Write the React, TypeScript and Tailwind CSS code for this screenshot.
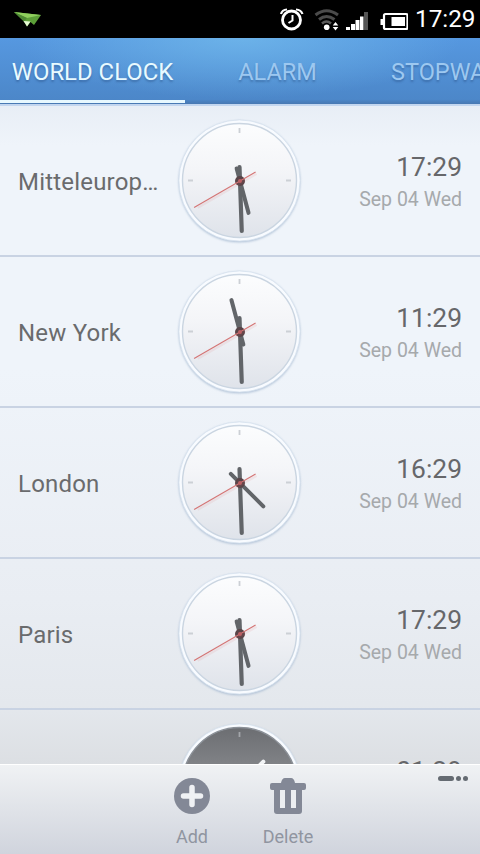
type City = {
  name: string
  time: string
  date: string
  hourAngle: number
  night?: boolean
}

const cities: City[] = [
  { name: "Mitteleuropäische Zeit", time: "17:29", date: "Sep 04 Wed", hourAngle: 165 },
  { name: "New York", time: "11:29", date: "Sep 04 Wed", hourAngle: 345 },
  { name: "London", time: "16:29", date: "Sep 04 Wed", hourAngle: 135 },
  { name: "Paris", time: "17:29", date: "Sep 04 Wed", hourAngle: 165 },
  { name: "", time: "01:29", date: "", hourAngle: 45, night: true },
]

function StatusBar() {
  return (
    <div className="flex h-[38px] shrink-0 items-center bg-black text-white">
      <svg className="ml-[13px]" width="29" height="20" viewBox="0 0 29 20">
        <path d="M1 3 L28 6 L21 16 L17.500 13 L14 17.500 L11 12.500 Z" fill="#5c9f38" />
        <path d="M1 3 L28 6 L14 9 Z" fill="#8fcf5d" />
        <path d="M1 3 L14 9 L11 12.500 Z" fill="#4e8a34" />
        <path d="M10.500 12 L17.500 12.500 L14 17.500 Z" fill="#e6fad2" />
      </svg>
      <svg className="ml-auto" width="130" height="38" viewBox="278 0 130 38" fill="none">
        {/* alarm */}
        <circle cx="291.500" cy="20" r="9" stroke="#fff" strokeWidth="2.800" />
        <path d="M292.500 15 V20.500 L288.500 23" stroke="#fff" strokeWidth="2" />
        <path d="M281 14 Q282 9.800 287 9.500 M296 9.500 Q301 9.800 302.500 14" stroke="#fff" strokeWidth="2.200" />
        {/* wifi */}
        <path d="M315.500 15 Q326.500 6.500 338 15" stroke="#4b4b4b" strokeWidth="3" />
        <path d="M319 19.500 Q326.500 13.500 334.500 19.500" stroke="#4b4b4b" strokeWidth="3" />
        <path d="M322 23.500 Q326.500 19.500 331 23.500" stroke="#5a5a5a" strokeWidth="2.500" />
        <circle cx="326.700" cy="27.200" r="2.800" fill="#fff" />
        <path d="M332.700 25.500 L335.500 22 L338.300 25.500 Z M332.700 27 L335.500 30.500 L338.300 27 Z" fill="#fff" />
        {/* signal */}
        <path d="M346 27h4v3h-4z M351 24h4v6h-4z M355.500 20h4v10h-4z M360 16.500h3.500v13.500h-3.500z" fill="#fff" />
        <path d="M364 12h4v18h-4z" fill="#555" />
        {/* battery */}
        <rect x="384" y="14" width="23.500" height="15" rx="1.500" stroke="#fff" strokeWidth="2.200" />
        <path d="M380.500 19h3v6h-3z M391.500 17h13.500v9h-13.500z" fill="#fff" />
      </svg>
      <span className="ml-[7px] w-[65px] text-[24.300px] leading-none">17:29</span>
    </div>
  )
}

function Tabs() {
  return (
    <div className="flex h-[68px] shrink-0 overflow-hidden whitespace-nowrap border-b-2 border-[#c3d6ef] bg-[radial-gradient(ellipse_at_50%_0%,rgba(115,187,236,0.75)_0%,transparent_65%),linear-gradient(#5698e0,#4c87c9_93%,#4878b2)] text-[23.500px] leading-[69px] [text-shadow:0_2px_2px_rgba(30,60,110,0.35)]">
      <div className="h-[65px] w-[185px] shrink-0 border-b-[3px] border-[#e7f8ff] text-center text-[23.900px] text-[#e8faff]">WORLD CLOCK</div>
      <div className="w-[185px] shrink-0 text-center text-[#9dc8f0]">ALARM</div>
      <div className="w-[185px] shrink-0 pl-[21px] text-[#9dc8f0]">STOPWATCH</div>
    </div>
  )
}

function Clock({ id, hourAngle, night }: { id: string; hourAngle: number; night?: boolean }) {
  const hand = night ? "#f2f4f6" : "#626569"
  const tick = night ? "#a3a6aa" : "#ccd0d5"
  return (
    <svg className="shrink-0" width="128" height="132" viewBox="-64 -66 128 132">
      <defs>
        <linearGradient id={id} x1="0" y1="0" x2="0" y2="1">
          <stop offset="0" stopColor={night ? "#6c6e72" : "#fcfdfe"} />
          <stop offset="0.4" stopColor={night ? "#85878b" : "#f4f5f8"} />
          <stop offset="1" stopColor={night ? "#909398" : "#dfe3ea"} />
        </linearGradient>
        <filter id={id + "s"} x="-20%" y="-20%" width="140%" height="140%">
          <feGaussianBlur stdDeviation="1.3" />
        </filter>
      </defs>
      <g transform="translate(-0.5 -0.5)">
        <circle cy="1" r="60.800" fill="#9fb4cd" opacity="0.8" filter={"url(#" + id + "s)"} />
        <circle r="60.600" fill="#f8fbff" stroke="#d5e1ee" strokeWidth="0.800" />
        <circle r="57" fill={"url(#" + id + ")"} stroke={night ? "#8b9097" : "#cad5e1"} strokeWidth="1.400" />
      </g>
      <path d="M-0.500 -53 V-48 M-52 -0.500 H-47 M46 -0.500 H51" stroke={tick} strokeWidth="1.800" />
      <g stroke={hand} strokeLinecap="round">
        <path d="M0 13 V-33" strokeWidth="4" transform={`rotate(${hourAngle})`} />
        <path d="M0 14 V-50" strokeWidth="4.200" transform="rotate(178)" />
      </g>
      <circle r="5" fill="#594448" />
      <g transform="rotate(240)">
        <path d="M-2 18 V-50" stroke="#d96868" strokeWidth="2.500" opacity="0.1" />
        <path d="M0 18 V-53" stroke="#d47474" strokeWidth="1.100" />
      </g>
      <circle r="2" fill="#bd6065" />
    </svg>
  )
}

function CityRow({ city, index }: { city: City; index: number }) {
  return (
    <div className="flex h-[151px] shrink-0 items-center border-b-2 border-[#c9d3e3] px-[18px]">
      <div className="w-[158px] shrink-0">
        <div className="w-[145px] truncate pt-[3px] text-[24px] leading-8 tracking-[0.2px] text-[#6a6b6d]">{city.name}</div>
      </div>
      <Clock id={`face${index}`} hourAngle={city.hourAngle} night={city.night} />
      <div className="grow pt-[5px] text-right">
        <div className="text-[26.400px] leading-8 text-[#66676a]">{city.time}</div>
        <div className="h-8 text-[19.500px] leading-[34px] text-[#a6a9ac]">{city.date}</div>
      </div>
    </div>
  )
}

function Toolbar() {
  return (
    <div className="relative flex h-[90px] shrink-0 justify-center border-t border-white bg-linear-to-b from-[#f0f2f4] to-[#d0d4dd] text-[18px] text-[#9095a0]">
      <div className="flex w-24 flex-col items-center pt-[13px]">
        <svg width="36" height="36" viewBox="0 0 36 36">
          <circle cx="18" cy="18" r="18" fill="#838896" />
          <path d="M18 9.500 V26.500 M9.500 18 H26.500" stroke="#eff1f4" strokeWidth="5.500" strokeLinecap="round" />
        </svg>
        <span className="mt-[11px] leading-6">Add</span>
      </div>
      <div className="flex w-24 flex-col items-center pt-[13px]">
        <svg width="36" height="36" viewBox="0 0 36 36">
          <path d="M4 11 H32 V33 Q32 36 29 36 H7 Q4 36 4 33 Z" fill="#838896" />
          <path d="M10 12 H15 V30 H10 Z M21 12 H26 V30 H21 Z" fill="#eceef1" />
          <path d="M11 5 Q12 0 15 0 H21 Q24 0 25 5 H34 Q36 5 36 7 V10 Q36 12 34 12 H2 Q0 12 0 10 V7 Q0 5 2 5 Z" fill="#838896" />
        </svg>
        <span className="mt-[11px] leading-6">Delete</span>
      </div>
      <div className="absolute right-3 top-[11px] flex items-center gap-[2px]">
        <span className="h-[5px] w-4 rounded-full bg-[#656b72]" />
        <span className="size-[5px] rounded-full bg-[#656b72]" />
        <span className="size-[5px] rounded-full bg-[#656b72]" />
      </div>
    </div>
  )
}

export default function App() {
  return (
    <div className="flex h-[854px] w-[480px] flex-col overflow-hidden font-[Roboto,sans-serif]">
      <StatusBar />
      <Tabs />
      <div className="flex min-h-0 grow flex-col overflow-hidden bg-[linear-gradient(#e8eef6,#eff4fa_6%,#eff4fa_40%,#e9edf3_75%,#e4e8ed_91%,#dcdfe3)]">
        {cities.map((city, i) => (
          <CityRow key={i} city={city} index={i} />
        ))}
      </div>
      <Toolbar />
    </div>
  )
}
